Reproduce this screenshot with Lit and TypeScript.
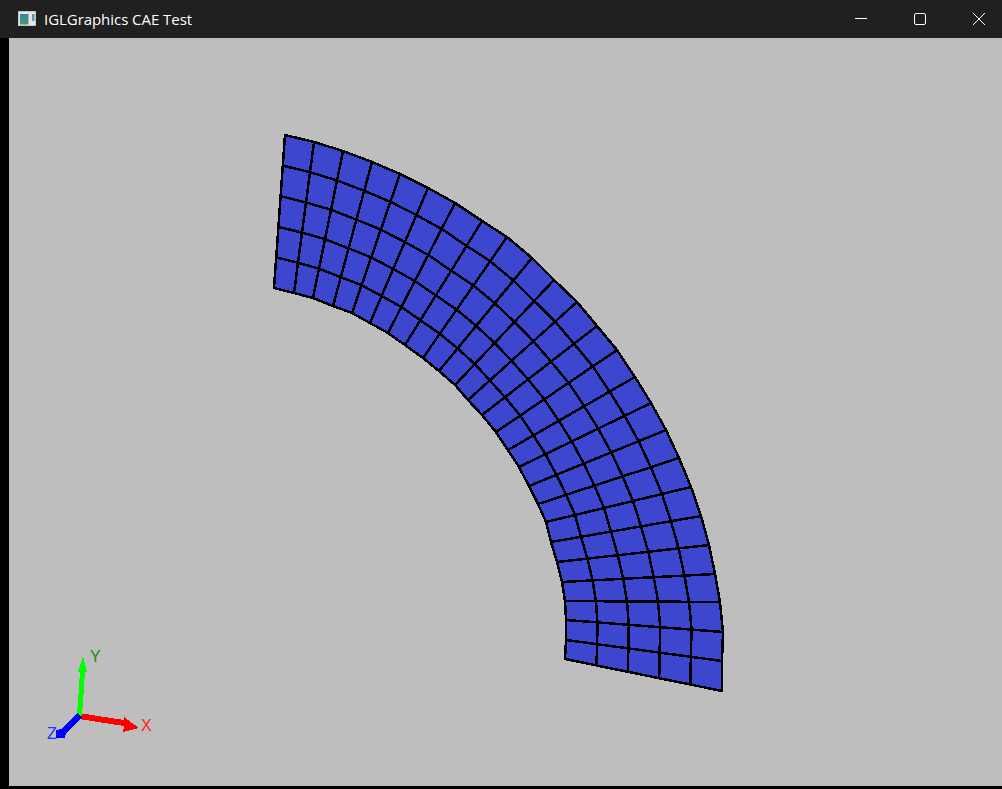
import { LitElement, html, css, svg } from "lit";
import { customElement } from "lit/decorators.js";

const OUTER: [number, number][] = [
  [722, 691], [722, 661], [723, 632], [720, 602], [715, 574], [709, 545], [701, 516], [691, 487], [679, 458],
  [666, 430], [651, 403], [635, 377], [617, 350], [597, 326], [577, 302], [554, 280], [532, 258], [507, 237],
  [482, 221], [455, 203], [428, 188], [400, 174], [372, 162], [343, 151], [314, 142], [285, 135],
];
const INNER: [number, number][] = [
  [565, 659], [566, 640], [566, 620], [565, 601], [562, 582], [557, 562], [551, 542], [546, 522], [538, 504],
  [529, 486], [519, 467], [508, 450], [496, 432], [482, 415], [468, 400], [455, 385], [439, 371], [423, 358],
  [405, 345], [388, 333], [370, 323], [352, 313], [333, 306], [313, 298], [294, 293], [274, 288],
];
const RINGS = 5;

const pts = (list: [number, number][]) => list.map((p) => `${p[0]},${p[1]}`).join(" ");
const node = (k: number, j: number): [number, number] => {
  const t = j / RINGS;
  return [INNER[k][0] + (OUTER[k][0] - INNER[k][0]) * t, INNER[k][1] + (OUTER[k][1] - INNER[k][1]) * t];
};

@customElement("app-root")
export class AppRoot extends LitElement {
  static styles = css`
    :host {
      display: flex;
      flex-direction: column;
      width: 1002px;
      height: 789px;
      background: #000;
      overflow: hidden;
      font-family: "Open Sans", "Noto Sans", sans-serif;
    }
    .titlebar {
      flex: none;
      height: 38px;
      background: #202020;
      display: flex;
      align-items: center;
      color: #fff;
      font-size: 15px;
    }
    .app-icon {
      flex: none;
      width: 18px;
      height: 16px;
      margin: 0 8px 0 18px;
    }
    .title {
      flex: 1;
      white-space: nowrap;
      letter-spacing: -0.05px;
      padding-bottom: 1px;
    }
    .controls {
      display: flex;
      margin-right: -7px;
    }
    .control {
      width: 59px;
      height: 38px;
      display: block;
    }
    .content {
      flex: none;
      height: 748px;
      padding-left: 9px;
    }
    .view {
      display: block;
      width: 993px;
      height: 748px;
      background: #bebebe;
    }
    .mesh-fill {
      fill: #3c46cf;
    }
    .mesh-line {
      fill: none;
      stroke: #000;
      stroke-width: 2.5;
      shape-rendering: crispEdges;
    }
    .mesh-edge {
      fill: none;
      stroke: #000;
      stroke-width: 2.5;
      stroke-linejoin: round;
      shape-rendering: crispEdges;
    }
    .axis {
      shape-rendering: crispEdges;
    }
    .label {
      font-family: "Liberation Sans", sans-serif;
      font-size: 16px;
    }
  `;

  render() {
    const kMax = OUTER.length - 1;
    const boundary = [...OUTER, ...[...INNER].reverse()];
    const radial = OUTER.map((_, k) => [node(k, 0), node(k, RINGS)] as [number, number][]);
    const arcs: [number, number][][] = [];
    for (let j = 1; j < RINGS; j++) {
      const line: [number, number][] = [];
      for (let k = 0; k <= kMax; k++) line.push(node(k, j));
      arcs.push(line);
    }
    return html`
      <div class="titlebar">
        <svg class="app-icon" viewBox="0 0 18 16" aria-hidden="true">
          <defs>
            <linearGradient id="pane" x1="0" y1="0" x2="0.3" y2="1">
              <stop offset="0" stop-color="#3f7fae"></stop>
              <stop offset="1" stop-color="#3f9d68"></stop>
            </linearGradient>
          </defs>
          <rect x="0.5" y="0.5" width="17" height="14" fill="#e4e8e8" stroke="#bfc4c4"></rect>
          <rect x="2" y="3" width="8.5" height="10.5" fill="url(#pane)"></rect>
          <rect x="14" y="3" width="2.5" height="7" fill="#5a9aa5"></rect>
        </svg>
        <div class="title">IGLGraphics CAE Test</div>
        <div class="controls">
          <svg class="control" viewBox="0 0 59 38" aria-hidden="true">
            <path d="M23 18.5h12" stroke="#fff" fill="none"></path>
          </svg>
          <svg class="control" viewBox="0 0 59 38" aria-hidden="true">
            <rect x="23.5" y="13.5" width="11" height="11" rx="1.5" stroke="#fff" fill="none"></rect>
          </svg>
          <svg class="control" viewBox="0 0 59 38" aria-hidden="true">
            <path d="M23 13l12 12M35 13L23 25" stroke="#fff" fill="none"></path>
          </svg>
        </div>
      </div>
      <div class="content">
        <svg class="view" viewBox="9 38 993 748" aria-hidden="true">
          <polygon class="mesh-fill" points=${pts(boundary)}></polygon>
          ${arcs.map((a) => svg`<polyline class="mesh-line" points=${pts(a)}></polyline>`)}
          ${radial.map((r) => svg`<polyline class="mesh-line" points=${pts(r)}></polyline>`)}
          <polygon class="mesh-edge" points=${pts(boundary)}></polygon>

          <g class="axis">
            <polygon fill="#ff0000" points="79,713 124,720 124,717 139,728 123,732 124,726 79,719"></polygon>
            <polygon fill="#00ff00" points="77,716 80,672 78,672 83,656 87,672 85,672 82,716"></polygon>
            <polygon fill="#0000ff" points="77,713 82,718 66,733 65,738 56,738 56,730 61,729"></polygon>
          </g>
          <text class="label" x="141" y="731" fill="#ff2020">X</text>
          <text class="label" x="90" y="662" fill="#158a15">Y</text>
          <text class="label" x="47" y="739" fill="#1a35ff">Z</text>
        </svg>
      </div>
    `;
  }
}
